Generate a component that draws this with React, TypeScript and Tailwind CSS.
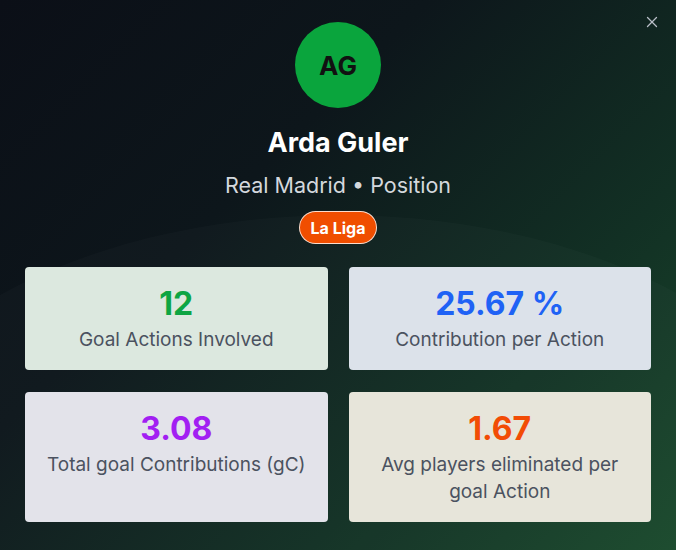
import { X } from "lucide-react";

const stats = [
  { value: "12", label: "Goal Actions Involved", bg: "bg-[#dce8df]", color: "text-[#0ea543]" },
  { value: "25.67 %", label: "Contribution per Action", bg: "bg-[#dce2ea]", color: "text-[#1f62f5]" },
  { value: "3.08", label: "Total goal Contributions (gC)", bg: "bg-[#e3e3ea]", color: "text-[#a21ff2]" },
  { value: "1.67", label: "Avg players eliminated per goal Action", bg: "bg-[#e7e5da]", color: "text-[#f24c05]" },
];

export default function App() {
  return (
    <div className="relative w-[676px] h-[550px] overflow-hidden bg-[linear-gradient(135deg,#0b0f17_0%,#0d161b_35%,#123024_70%,#1a4a2c_100%)] font-['Inter',sans-serif]">
      <div className="pointer-events-none absolute -left-40 top-[215px] h-[600px] w-[1000px] rounded-[50%] bg-white/[0.02]" />
      <button className="absolute right-[15px] top-[13px] text-[#b8bec7]">
        <X className="h-[18px] w-[18px]" strokeWidth={1.75} />
      </button>
      <div className="relative flex flex-col items-center pt-[22px]">
        <div className="flex h-[86px] w-[86px] items-center justify-center rounded-full bg-[#0aa53d]">
          <span className="text-[26px] font-bold text-[#111]">AG</span>
        </div>
        <h1 className="mt-[19px] text-[27px] leading-8 font-bold text-white">Arda Guler</h1>
        <p className="mt-[12px] text-[21.5px] leading-7 text-[#d4d8dd]">Real Madrid • Position</p>
        <span className="mt-[12px] flex h-[33px] items-center rounded-full border border-white/80 bg-[#f04e00] px-[11px] text-[16px] font-bold text-white">
          La Liga
        </span>
      </div>
      <div className="relative mt-[23px] grid grid-cols-2 gap-x-[21px] gap-y-[22px] px-[25px]">
        {stats.map((s) => (
          <div key={s.value} className={`${s.bg} flex flex-col items-center rounded-[4px] px-4 pt-[19px] pb-[17px] text-center`}>
            <span className={`${s.color} text-[32px] leading-9 font-bold`}>{s.value}</span>
            <span className="mt-[4px] text-[19px] leading-[27px] text-[#4b5260]">{s.label}</span>
          </div>
        ))}
      </div>
    </div>
  );
}
